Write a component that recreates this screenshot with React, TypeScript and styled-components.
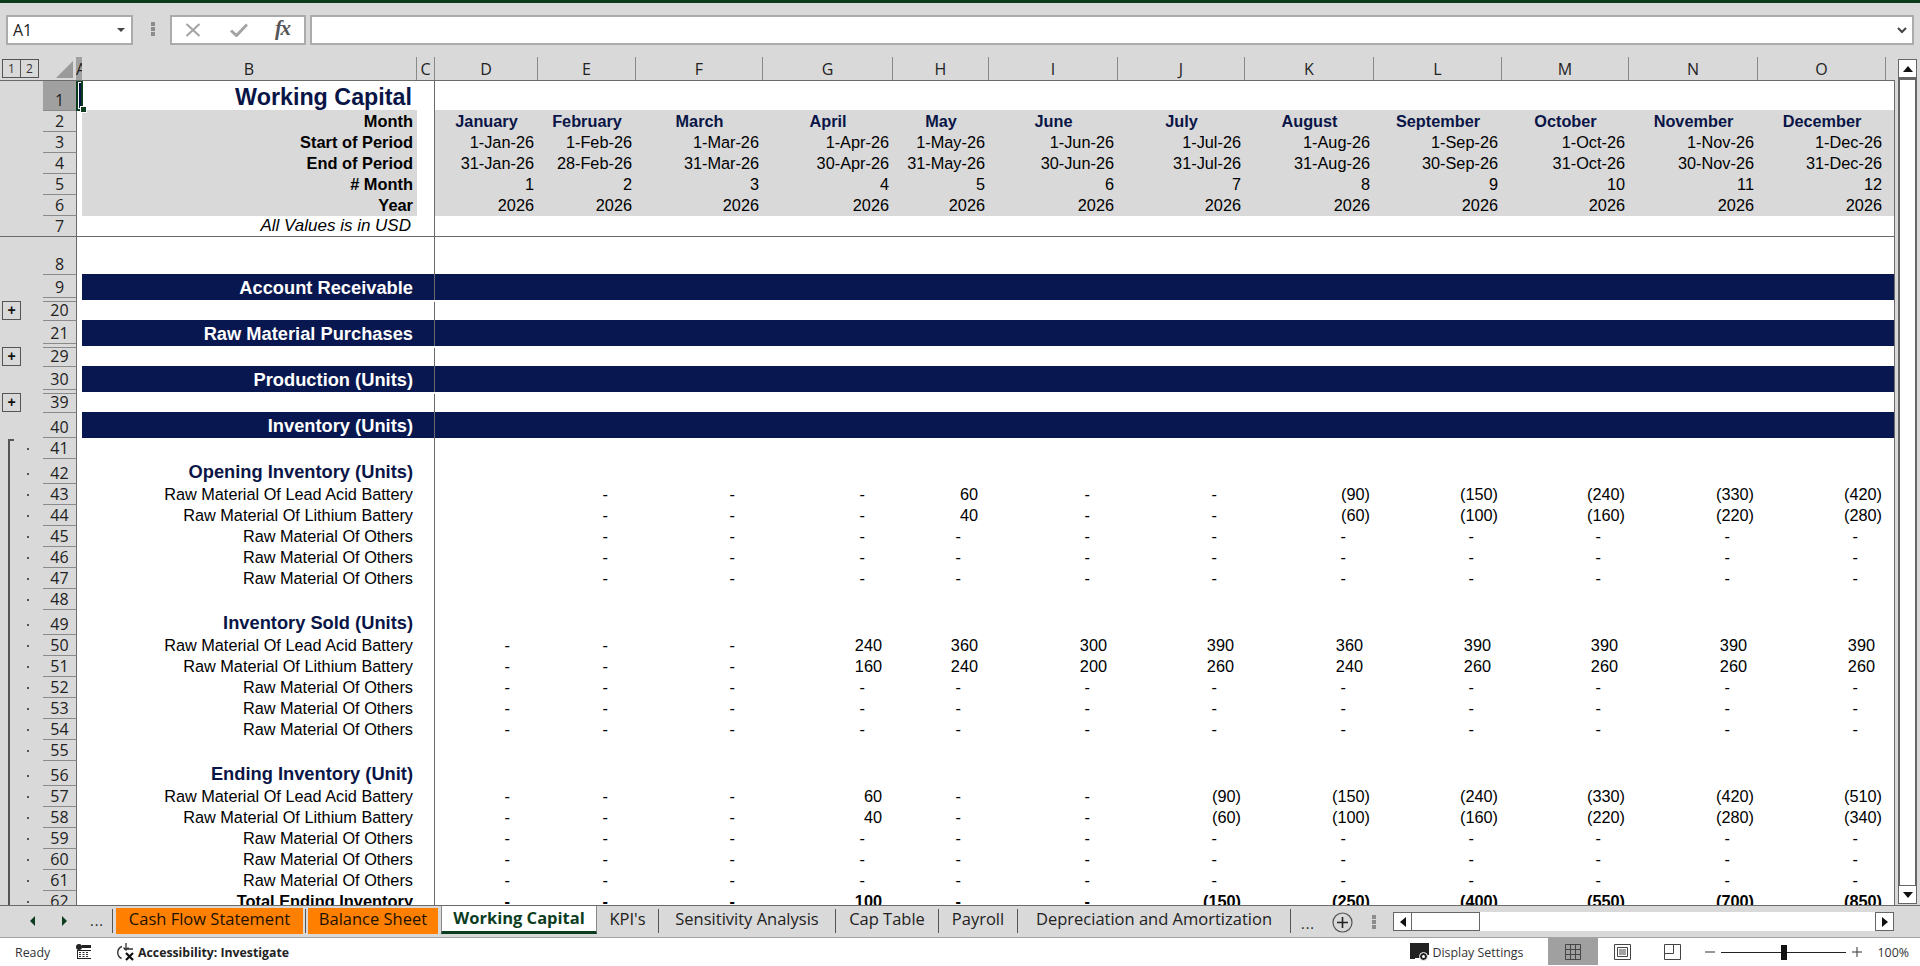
import styled, { createGlobalStyle } from 'styled-components';

const GlobalStyle = createGlobalStyle`
  html, body { margin: 0; padding: 0; width: 1920px; height: 966px; overflow: hidden; background: #d9d9d9; }
  * { box-sizing: border-box; }
  body { font-family: "Liberation Sans", Arial, sans-serif; }
`;

const UI_FONT = '"Open Sans", "Noto Sans", sans-serif';
const NAVY = '#0a1547';
const LINE = '#6a6a6a';
const GREY = '#d9d9d9';

type Fill = 'grey' | 'navy';
type Variant = 'title' | 'head' | 'note' | 'band' | 'section' | 'plain' | 'total';

type RowDef = {
  n: number;
  h: number;
  label?: string;
  variant?: Variant;
  fill?: Fill;
  values?: string[];
  centered?: boolean;
  navyText?: boolean;
  bold?: boolean;
  double?: boolean;
  plus?: boolean;
  grouped?: boolean;
  freeze?: boolean;
  selected?: boolean;
};

const COLUMNS: { name: string; w: number }[] = [
  { name: 'D', w: 103 },
  { name: 'E', w: 98 },
  { name: 'F', w: 127 },
  { name: 'G', w: 130 },
  { name: 'H', w: 96 },
  { name: 'I', w: 129 },
  { name: 'J', w: 127 },
  { name: 'K', w: 129 },
  { name: 'L', w: 128 },
  { name: 'M', w: 127 },
  { name: 'N', w: 129 },
  { name: 'O', w: 128 },
];

const MONTHS = ['January', 'February', 'March', 'April', 'May', 'June', 'July', 'August', 'September', 'October', 'November', 'December'];
const SHORT = ['Jan', 'Feb', 'Mar', 'Apr', 'May', 'Jun', 'Jul', 'Aug', 'Sep', 'Oct', 'Nov', 'Dec'];
const LAST_DAY = [31, 28, 31, 30, 31, 30, 31, 31, 30, 31, 30, 31];
const ZERO_ROW = Array(12).fill('-');
const ZERO_ROW_FROM_E = ['', ...Array(11).fill('-')];

const RM_LEAD = 'Raw Material Of Lead Acid Battery';
const RM_LITHIUM = 'Raw Material Of Lithium Battery';
const RM_OTHERS = 'Raw Material Of Others';

const ROWS: RowDef[] = [
  { n: 1, h: 30, label: 'Working Capital', variant: 'title', selected: true },
  { n: 2, h: 21, label: 'Month', variant: 'head', fill: 'grey', values: MONTHS, centered: true, navyText: true, bold: true },
  { n: 3, h: 21, label: 'Start of Period', variant: 'head', fill: 'grey', values: SHORT.map((m) => `1-${m}-26`) },
  { n: 4, h: 21, label: 'End of Period', variant: 'head', fill: 'grey', values: SHORT.map((m, i) => `${LAST_DAY[i]}-${m}-26`) },
  { n: 5, h: 21, label: '# Month', variant: 'head', fill: 'grey', values: MONTHS.map((_, i) => `${i + 1}`) },
  { n: 6, h: 21, label: 'Year', variant: 'head', fill: 'grey', values: MONTHS.map(() => '2026') },
  { n: 7, h: 21, label: 'All Values is in USD', variant: 'note', freeze: true },
  { n: 8, h: 38 },
  { n: 9, h: 27, label: 'Account Receivable', variant: 'band', fill: 'navy', double: true },
  { n: 20, h: 19, plus: true },
  { n: 21, h: 27, label: 'Raw Material Purchases', variant: 'band', fill: 'navy', double: true },
  { n: 29, h: 19, plus: true },
  { n: 30, h: 27, label: 'Production (Units)', variant: 'band', fill: 'navy', double: true },
  { n: 39, h: 19, plus: true },
  { n: 40, h: 25, label: 'Inventory (Units)', variant: 'band', fill: 'navy' },
  { n: 41, h: 21, grouped: true },
  { n: 42, h: 25, label: 'Opening Inventory (Units)', variant: 'section', grouped: true },
  { n: 43, h: 21, label: RM_LEAD, variant: 'plain', grouped: true, values: ['', '-', '-', '-', '60', '-', '-', '(90)', '(150)', '(240)', '(330)', '(420)'] },
  { n: 44, h: 21, label: RM_LITHIUM, variant: 'plain', grouped: true, values: ['', '-', '-', '-', '40', '-', '-', '(60)', '(100)', '(160)', '(220)', '(280)'] },
  { n: 45, h: 21, label: RM_OTHERS, variant: 'plain', grouped: true, values: ZERO_ROW_FROM_E },
  { n: 46, h: 21, label: RM_OTHERS, variant: 'plain', grouped: true, values: ZERO_ROW_FROM_E },
  { n: 47, h: 21, label: RM_OTHERS, variant: 'plain', grouped: true, values: ZERO_ROW_FROM_E },
  { n: 48, h: 21, grouped: true },
  { n: 49, h: 25, label: 'Inventory Sold (Units)', variant: 'section', grouped: true },
  { n: 50, h: 21, label: RM_LEAD, variant: 'plain', grouped: true, values: ['-', '-', '-', '240', '360', '300', '390', '360', '390', '390', '390', '390'] },
  { n: 51, h: 21, label: RM_LITHIUM, variant: 'plain', grouped: true, values: ['-', '-', '-', '160', '240', '200', '260', '240', '260', '260', '260', '260'] },
  { n: 52, h: 21, label: RM_OTHERS, variant: 'plain', grouped: true, values: ZERO_ROW },
  { n: 53, h: 21, label: RM_OTHERS, variant: 'plain', grouped: true, values: ZERO_ROW },
  { n: 54, h: 21, label: RM_OTHERS, variant: 'plain', grouped: true, values: ZERO_ROW },
  { n: 55, h: 21, grouped: true },
  { n: 56, h: 25, label: 'Ending Inventory (Unit)', variant: 'section', grouped: true },
  { n: 57, h: 21, label: RM_LEAD, variant: 'plain', grouped: true, values: ['-', '-', '-', '60', '-', '-', '(90)', '(150)', '(240)', '(330)', '(420)', '(510)'] },
  { n: 58, h: 21, label: RM_LITHIUM, variant: 'plain', grouped: true, values: ['-', '-', '-', '40', '-', '-', '(60)', '(100)', '(160)', '(220)', '(280)', '(340)'] },
  { n: 59, h: 21, label: RM_OTHERS, variant: 'plain', grouped: true, values: ZERO_ROW },
  { n: 60, h: 21, label: RM_OTHERS, variant: 'plain', grouped: true, values: ZERO_ROW },
  { n: 61, h: 21, label: RM_OTHERS, variant: 'plain', grouped: true, values: ZERO_ROW },
  { n: 62, h: 21, label: 'Total Ending Inventory', variant: 'total', grouped: true, bold: true, values: ['-', '-', '-', '100', '-', '-', '(150)', '(250)', '(400)', '(550)', '(700)', '(850)'] },
];

const Page = styled.div`
  width: 1920px;
  height: 966px;
  display: flex;
  flex-direction: column;
  background: ${GREY};
  overflow: hidden;
`;

const TitleStrip = styled.div`
  height: 3px;
  flex: none;
  background: #0b3a1c;
`;

const FormulaBar = styled.div`
  height: 54px;
  flex: none;
  padding: 12px 6px 0 6px;
  display: flex;
  align-items: flex-start;
`;

const NameBox = styled.div`
  width: 127px;
  height: 30px;
  background: #fff;
  border: 2px solid #ababab;
  display: flex;
  align-items: center;
  justify-content: space-between;
  padding: 0 6px 0 5px;
  font: 16px ${UI_FONT};
  color: #222;
`;

const Caret = styled.span`
  width: 0;
  height: 0;
  border-left: 4px solid transparent;
  border-right: 4px solid transparent;
  border-top: 4px solid #444;
`;

const GripSpacer = styled.span`
  width: 18px;
  flex: none;
`;

const GripDots = styled.div`
  width: 4px;
  height: 14px;
  margin: 7px 0 0 0;
  background: repeating-linear-gradient(to bottom, #8c8c8c 0 4px, transparent 4px 5px);
`;

const FormulaButtons = styled.div`
  width: 136px;
  height: 30px;
  background: #fff;
  border: 2px solid #ababab;
  display: flex;
  align-items: center;
  padding-left: 13px;
  margin-left: 15px;
`;

const CheckMark = styled.svg`
  margin-left: 29px;
  flex: none;
`;

const FxLabel = styled.span`
  font: italic bold 21px "Liberation Serif", serif;
  color: #555;
  margin-left: 27px;
  margin-top: -3px;
  letter-spacing: -1.5px;
`;

const FormulaInput = styled.div`
  flex: 1;
  height: 30px;
  margin-left: 4px;
  background: #fff;
  border: 2px solid #ababab;
  display: flex;
  align-items: center;
  justify-content: flex-end;
  padding-right: 5px;
`;

const Workspace = styled.div`
  height: 848px;
  flex: none;
  display: flex;
`;

const SheetArea = styled.div`
  width: 1895px;
  display: flex;
  flex-direction: column;
`;

const ColumnHeader = styled.div`
  height: 24px;
  flex: none;
  display: flex;
  border-bottom: 1px solid ${LINE};
`;

const Corner = styled.div`
  width: 76px;
  display: flex;
  align-items: flex-start;
  padding: 2px 3px 0 2px;
  justify-content: space-between;
`;

const OutlineLevels = styled.div`
  display: flex;
`;

const OutlineLevel = styled.div`
  width: 19px;
  height: 19px;
  border: 1px solid #555;
  margin-right: -1px;
  font: 12px ${UI_FONT};
  color: #333;
  display: flex;
  align-items: center;
  justify-content: center;
`;

const SelectAll = styled.svg`
  margin-top: 2px;
  flex: none;
`;

const ColHead = styled.div<{ $w: number; $active?: boolean; $noEdge?: boolean }>`
  width: ${(p) => p.$w}px;
  flex: none;
  overflow: hidden;
  background: ${(p) => (p.$active ? '#a0a0a0' : 'transparent')};
  border-right: ${(p) => (p.$noEdge ? 'none' : '1px solid #8a8a8a')};
  font: 16px ${UI_FONT};
  color: #222;
  line-height: 25px;
  text-align: center;
`;

const SheetBody = styled.div`
  flex: 1;
  position: relative;
  overflow: hidden;
  background: #fff;
  border-right: 1px solid ${LINE};
`;

const Row = styled.div<{ $h: number; $freeze?: boolean }>`
  height: ${(p) => p.$h}px;
  display: flex;
  align-items: stretch;
  border-bottom: ${(p) => (p.$freeze ? `1px solid ${LINE}` : 'none')};
`;

const Gutter = styled.div`
  width: 43px;
  flex: none;
  background: ${GREY};
  position: relative;
`;

const OutlineDot = styled.span`
  position: absolute;
  left: 27px;
  bottom: 9px;
  width: 2px;
  height: 2px;
  background: #555;
`;

const PlusButton = styled.div`
  position: absolute;
  left: 2px;
  bottom: 1px;
  width: 19px;
  height: 19px;
  background: ${GREY};
  border: 1px solid #555;
  font: bold 14px/16px "Liberation Sans", sans-serif;
  color: #111;
  text-align: center;
`;

const RowHead = styled.div<{ $active?: boolean; $double?: boolean; $noLine?: boolean }>`
  width: 34px;
  flex: none;
  position: relative;
  background: ${(p) => (p.$active ? '#a0a0a0' : GREY)};
  border-right: 1px solid ${LINE};
  border-bottom: ${(p) => (p.$noLine ? 'none' : '1px solid #8a8a8a')};
  padding-bottom: ${(p) => (p.$double ? 4 : 0)}px;
  display: flex;
  align-items: flex-end;
  justify-content: center;
  font: 16px/20px ${UI_FONT};
  color: #222;
  &::after {
    content: '';
    display: ${(p) => (p.$double ? 'block' : 'none')};
    position: absolute;
    left: 0;
    right: 0;
    bottom: 3px;
    height: 1px;
    background: #8a8a8a;
  }
`;

const ColA = styled.div`
  width: 5px;
  flex: none;
`;

const fillColor = (fill?: Fill) => (fill === 'navy' ? '#08174f' : fill === 'grey' ? GREY : 'transparent');

const LabelCell = styled.div<{ $fill?: Fill; $double?: boolean }>`
  width: 335px;
  flex: none;
  background: ${(p) => fillColor(p.$fill)};
  margin: ${(p) => (p.$fill ? '-1px' : '0')} 0 ${(p) => (p.$double ? 2 : 0)}px 0;
  padding: 0 4px ${(p) => (p.$fill === 'navy' ? 2 : 1)}px 0;
  display: flex;
  align-items: flex-end;
  justify-content: flex-end;
  white-space: nowrap;
`;

const Label = styled.span<{ $variant: Variant }>`
  line-height: 20px;
  ${(p) => {
    switch (p.$variant) {
      case 'title':
        return `font-size: 23.3px; font-weight: 700; color: ${NAVY}; line-height: 26px; margin-right: 1px;`;
      case 'head':
        return 'font-size: 16.4px; font-weight: 700; color: #000;';
      case 'note':
        return 'font-size: 17px; font-style: italic; color: #000; margin: 0 2px -1px 0;';
      case 'band':
        return 'font-size: 18.3px; font-weight: 700; color: #fff;';
      case 'section':
        return `font-size: 18.3px; font-weight: 700; color: ${NAVY}; margin-bottom: 1px;`;
      case 'total':
        return 'font-size: 16.4px; font-weight: 700; color: #000;';
      default:
        return 'font-size: 16.3px; color: #000;';
    }
  }}
`;

const GapCell = styled.div<{ $fill?: Fill; $double?: boolean }>`
  width: 18px;
  flex: none;
  background: ${(p) => (p.$fill === 'navy' ? fillColor(p.$fill) : 'transparent')};
  margin: ${(p) => (p.$fill === 'navy' ? '-1px' : '0')} 0 ${(p) => (p.$double ? 2 : 0)}px 0;
  border-right: 1px solid ${LINE};
`;

const DataCells = styled.div<{ $fill?: Fill; $double?: boolean }>`
  flex: 1;
  display: grid;
  grid-template-columns: ${COLUMNS.map((c) => `${c.w}px`).join(' ')} 8px;
  background: ${(p) => fillColor(p.$fill)};
  margin: ${(p) => (p.$fill ? '-1px' : '0')} 0 ${(p) => (p.$double ? 2 : 0)}px 0;
`;

const padFor = (value: string) => {
  if (value === '-') return 28;
  if (value.startsWith('(')) return 4;
  return 11;
};

const Value = styled.div<{ $pad: number; $center?: boolean; $navy?: boolean; $bold?: boolean }>`
  display: flex;
  align-items: flex-end;
  justify-content: ${(p) => (p.$center ? 'center' : 'flex-end')};
  padding: 0 ${(p) => p.$pad}px 1px 0;
  font-size: 16.3px;
  line-height: 20px;
  font-weight: ${(p) => (p.$bold ? 700 : 400)};
  color: ${(p) => (p.$navy ? NAVY : '#000')};
  white-space: nowrap;
`;

const SelectionBox = styled.div`
  position: absolute;
  left: 76px;
  top: -1px;
  width: 7px;
  height: 31px;
  background: #fff;
  border: 2px solid #0c3d1f;
  padding: 1px 0;
`;

const SelectionInk = styled.div`
  height: 100%;
  background: ${NAVY};
  margin: 0 0 0 1px;
  width: 2px;
`;

const SelectionHandle = styled.div`
  position: absolute;
  left: 2px;
  bottom: -4px;
  width: 7px;
  height: 7px;
  background: #0c3d1f;
  border: 1px solid #fff;
`;

const GroupBracket = styled.div`
  position: absolute;
  left: 8px;
  top: 358px;
  bottom: 0;
  width: 6px;
  border-left: 2px solid #555;
  border-top: 2px solid #555;
`;

const VScroll = styled.div`
  width: 25px;
  flex: none;
  padding: 2px 3px 1px 3px;
  display: flex;
  flex-direction: column;
`;

const ScrollButton = styled.div<{ $w?: number; $h?: number }>`
  width: ${(p) => (p.$w ? `${p.$w}px` : '100%')};
  height: ${(p) => (p.$h ? `${p.$h}px` : '100%')};
  flex: none;
  background: #fff;
  border: 1px solid #666;
  display: flex;
  align-items: center;
  justify-content: center;
`;

const VThumb = styled.div`
  flex: 1;
  background: #fff;
  border-left: 2px solid #666;
  border-right: 2px solid #666;
  border-top: 2px solid #666;
`;

const TabBar = styled.div`
  height: 33px;
  flex: none;
  display: flex;
  align-items: flex-start;
  border-top: 1px solid ${LINE};
  border-bottom: 1px solid #a3a3a3;
  font: 16.5px ${UI_FONT};
  color: #222;
`;

const SheetNav = styled.div`
  width: 113px;
  height: 24px;
  margin-top: 3px;
  flex: none;
  border-right: 1px solid #555;
  display: flex;
  align-items: center;
  padding-left: 30px;
`;

const NavArrow = styled.span<{ $left?: boolean }>`
  width: 0;
  height: 0;
  border-top: 5px solid transparent;
  border-bottom: 5px solid transparent;
  border-right: ${(p) => (p.$left ? '5px solid #0c3d1f' : 'none')};
  border-left: ${(p) => (p.$left ? 'none' : '5px solid #0c3d1f')};
  margin-right: 27px;
`;

const Ellipsis = styled.span<{ $ml?: number }>`
  font: 14px ${UI_FONT};
  letter-spacing: 1px;
  color: #222;
  line-height: 20px;
  margin-left: ${(p) => p.$ml ?? 0}px;
`;

const Tab = styled.div<{ $w: number; $tone: 'plain' | 'orange' | 'active' }>`
  width: ${(p) => p.$w}px;
  flex: none;
  display: flex;
  align-items: center;
  justify-content: center;
  white-space: nowrap;
  padding-bottom: 5px;
  ${(p) =>
    p.$tone === 'orange'
      ? 'height: 26px; margin-top: 2px; background: #ff8000; color: #1d1200;'
      : p.$tone === 'active'
        ? 'height: 28px; padding-bottom: 3px; background: #fff; color: #0c3d1f; font-weight: 700; border-bottom: 3px solid #0c3d1f; border-left: 1px solid #8a8a8a; border-right: 1px solid #8a8a8a;'
        : 'height: 24px; margin-top: 3px; border-right: 1px solid #555;'}
`;

const TabGap = styled.div<{ $w: number; $line?: boolean }>`
  width: ${(p) => p.$w}px;
  flex: none;
  height: 24px;
  margin-top: 3px;
  background: ${(p) => (p.$line ? 'linear-gradient(#555, #555) center / 1px 100% no-repeat' : 'none')};
`;

const MoreTabs = styled.div`
  width: 34px;
  flex: none;
  margin-top: 5px;
  text-align: center;
`;

const AddSheet = styled.svg`
  flex: none;
  margin: 6px 0 0 7px;
`;

const TabGrip = styled.div`
  width: 4px;
  height: 14px;
  flex: none;
  margin: 9px 0 0 19px;
  background: repeating-linear-gradient(to bottom, #8c8c8c 0 4px, transparent 4px 5px);
`;

const HScroll = styled.div`
  width: 501px;
  height: 19px;
  flex: none;
  margin: 6px 0 0 17px;
  background: #fff;
  display: flex;
`;

const HThumb = styled.div`
  width: 69px;
  margin-left: -1px;
  border: 1px solid #666;
`;

const HTrack = styled.div`
  flex: 1;
`;

const StatusBar = styled.div`
  flex: 1;
  background: #fff;
  display: flex;
  align-items: center;
  font: 12.4px ${UI_FONT};
  color: #333;
`;

const ReadyText = styled.span`
  width: 61px;
  margin-left: 15px;
  flex: none;
`;

const StatusIcon = styled.svg<{ $ml?: number }>`
  flex: none;
  margin-left: ${(p) => p.$ml ?? 0}px;
`;

const AccessText = styled.span`
  margin-left: 2px;
  font-weight: 700;
  color: #222;
  font-size: 12.3px;
  white-space: nowrap;
`;

const DisplaySettings = styled.div`
  margin-left: auto;
  display: flex;
  align-items: center;
  gap: 3px;
`;

const ViewButton = styled.div<{ $active?: boolean; $ml?: number }>`
  width: 50px;
  height: 27px;
  margin: 0 0 1px ${(p) => p.$ml ?? 0}px;
  flex: none;
  align-self: flex-start;
  background: ${(p) => (p.$active ? '#a0a0a0' : 'transparent')};
  display: flex;
  align-items: center;
  justify-content: center;
`;

const ZoomGroup = styled.div`
  display: flex;
  align-items: center;
  margin-left: 7px;
  margin-right: 11px;
`;

const ZoomTrack = styled.div`
  width: 125px;
  height: 1px;
  margin: 0 6px;
  background: #222;
  position: relative;
`;

const ZoomThumb = styled.div`
  position: absolute;
  left: 60px;
  top: -7px;
  width: 6px;
  height: 15px;
  background: #111;
`;

const ZoomSign = styled.svg`
  flex: none;
`;

const ZoomValue = styled.span`
  margin-left: 16px;
`;

const CancelIcon = () => (
  <svg width="16" height="14" viewBox="0 0 16 14">
    <path d="M1.5 1 14.5 13M14.5 1 1.5 13" stroke="#a3a3a3" strokeWidth="2" fill="none" />
  </svg>
);

const CheckIcon = () => (
  <CheckMark width="18" height="14" viewBox="0 0 18 14">
    <path d="M1 7.5 6.5 12.5 17 1.5" stroke="#a3a3a3" strokeWidth="3" fill="none" />
  </CheckMark>
);

const UpTriangle = () => (
  <svg width="10" height="6" viewBox="0 0 10 6">
    <path d="M5 0 10 6H0Z" fill="#111" />
  </svg>
);

const DownTriangle = () => (
  <svg width="10" height="6" viewBox="0 0 10 6">
    <path d="M0 0H10L5 6Z" fill="#111" />
  </svg>
);

const SideTriangle = ({ left }: { left?: boolean }) => (
  <svg width="6" height="10" viewBox="0 0 6 10">
    <path d={left ? 'M6 0V10L0 5Z' : 'M0 0V10L6 5Z'} fill="#111" />
  </svg>
);

const App = () => {
  return (
    <Page>
      <GlobalStyle />
      <TitleStrip />
      <FormulaBar>
        <NameBox>
          A1
          <Caret />
        </NameBox>
        <GripSpacer />
        <GripDots />
        <FormulaButtons>
          <CancelIcon />
          <CheckIcon />
          <FxLabel>fx</FxLabel>
        </FormulaButtons>
        <FormulaInput>
          <svg width="10" height="7" viewBox="0 0 10 7">
            <path d="M1 1 5 5 9 1" stroke="#444" strokeWidth="2" fill="none" />
          </svg>
        </FormulaInput>
      </FormulaBar>

      <Workspace>
        <SheetArea>
          <ColumnHeader>
            <Corner>
              <OutlineLevels>
                <OutlineLevel>1</OutlineLevel>
                <OutlineLevel>2</OutlineLevel>
              </OutlineLevels>
              <SelectAll width="17" height="17" viewBox="0 0 17 17">
                <path d="M17 0V17H0Z" fill="#9a9a9a" />
              </SelectAll>
            </Corner>
            <ColHead $w={6} $active $noEdge>
              A
            </ColHead>
            <ColHead $w={335}>B</ColHead>
            <ColHead $w={18}>C</ColHead>
            {COLUMNS.map((col) => (
              <ColHead key={col.name} $w={col.w}>
                {col.name}
              </ColHead>
            ))}
          </ColumnHeader>

          <SheetBody>
            {ROWS.map((row) => (
              <Row key={row.n} $h={row.h} $freeze={row.freeze}>
                <Gutter>
                  {row.grouped && <OutlineDot />}
                  {row.plus && <PlusButton>+</PlusButton>}
                </Gutter>
                <RowHead $active={row.selected} $double={row.double} $noLine={row.freeze}>
                  {row.n}
                </RowHead>
                <ColA />
                <LabelCell $fill={row.fill} $double={row.double}>
                  {row.label && <Label $variant={row.variant ?? 'plain'}>{row.label}</Label>}
                </LabelCell>
                <GapCell $fill={row.fill} $double={row.double} />
                <DataCells $fill={row.fill} $double={row.double}>
                  {row.values?.map((value, idx) => (
                    <Value
                      key={COLUMNS[idx].name}
                      $pad={row.n < 7 ? (row.centered ? 0 : 4) : padFor(value)}
                      $center={row.centered}
                      $navy={row.navyText}
                      $bold={row.bold}
                    >
                      {value}
                    </Value>
                  ))}
                </DataCells>
              </Row>
            ))}
            <GroupBracket />
            <SelectionBox>
              <SelectionInk />
              <SelectionHandle />
            </SelectionBox>
          </SheetBody>
        </SheetArea>

        <VScroll>
          <ScrollButton $h={19}>
            <UpTriangle />
          </ScrollButton>
          <VThumb />
          <ScrollButton $h={19}>
            <DownTriangle />
          </ScrollButton>
        </VScroll>
      </Workspace>

      <TabBar>
        <SheetNav>
          <NavArrow $left />
          <NavArrow />
          <Ellipsis $ml={-4}>...</Ellipsis>
        </SheetNav>
        <TabGap $w={3} />
        <Tab $w={187} $tone="orange">
          Cash Flow Statement
        </Tab>
        <TabGap $w={5} $line />
        <Tab $w={130} $tone="orange">
          Balance Sheet
        </Tab>
        <TabGap $w={3} />
        <Tab $w={156} $tone="active">
          Working Capital
        </Tab>
        <Tab $w={62} $tone="plain">
          KPI's
        </Tab>
        <Tab $w={177} $tone="plain">
          Sensitivity Analysis
        </Tab>
        <Tab $w={103} $tone="plain">
          Cap Table
        </Tab>
        <Tab $w={79} $tone="plain">
          Payroll
        </Tab>
        <Tab $w={273} $tone="plain">
          Depreciation and Amortization
        </Tab>
        <MoreTabs>
          <Ellipsis>...</Ellipsis>
        </MoreTabs>
        <AddSheet width="21" height="21" viewBox="0 0 21 21">
          <circle cx="10.5" cy="10.5" r="9.5" fill="none" stroke="#555" strokeWidth="1.2" />
          <path d="M10.5 5v11M5 10.5h11" stroke="#222" strokeWidth="1.6" />
        </AddSheet>
        <TabGrip />
        <HScroll>
          <ScrollButton $w={19}>
            <SideTriangle left />
          </ScrollButton>
          <HThumb />
          <HTrack />
          <ScrollButton $w={19}>
            <SideTriangle />
          </ScrollButton>
        </HScroll>
      </TabBar>

      <StatusBar>
        <ReadyText>Ready</ReadyText>
        <StatusIcon width="16" height="16" viewBox="0 0 16 16">
          <circle cx="3" cy="3" r="3" fill="#222" />
          <path d="M6 1h9v3H6zM1 6h14v9H1z" fill="#222" />
          <path d="M2 7h13v7H2z" fill="#fff" />
          <path d="M3 8h2v1H3zM6.500 8h2v1h-2zM10 8h2v1h-2zM3 10h2v1H3zM6.500 10h2v1h-2zM10 10h2v1h-2zM3 12h2v1H3zM6.500 12h2v1h-2zM10 12h2v1h-2z" fill="#333" />
        </StatusIcon>
        <StatusIcon $ml={24} width="20" height="18" viewBox="0 0 20 18">
          <path d="M6 3.500A6.500 6.500 0 0 0 5.500 15.500" fill="none" stroke="#333" strokeWidth="1.4" />
          <path d="M10 0v7M7.500 4.500 10 7l2.500-2.500M8 6h9" fill="none" stroke="#333" strokeWidth="1.3" />
          <path d="M10 10l7 7M17 10l-7 7" stroke="#111" strokeWidth="2.2" />
        </StatusIcon>
        <AccessText>Accessibility: Investigate</AccessText>

        <DisplaySettings>
          <StatusIcon width="20" height="19" viewBox="0 0 20 19">
            <path d="M0 0h19v12H10v3H5v1H0z" fill="#222" />
            <circle cx="13.500" cy="13.500" r="4" fill="#222" stroke="#fff" strokeWidth="1" />
            <circle cx="13.500" cy="13.500" r="1.500" fill="#fff" />
          </StatusIcon>
          Display Settings
        </DisplaySettings>

        <ViewButton $active $ml={24}>
          <svg width="16" height="16" viewBox="0 0 16 16">
            <path d="M.5.5h15v15H.5zM5.500.5v15M10.500.5v15M.5 5.500h15M.5 10.500h15" fill="none" stroke="#444" />
          </svg>
        </ViewButton>
        <ViewButton>
          <svg width="17" height="16" viewBox="0 0 17 16">
            <path d="M.5.5h16v15H.5zM3.500 3.500h10v9h-10z" fill="none" stroke="#444" />
            <path d="M5 6h7M5 8h7M5 10h7" stroke="#444" />
          </svg>
        </ViewButton>
        <ViewButton>
          <svg width="17" height="16" viewBox="0 0 17 16">
            <path d="M.5.5h16v15H.5zM.5 9.500h9V.5" fill="none" stroke="#444" />
          </svg>
        </ViewButton>

        <ZoomGroup>
          <ZoomSign width="10" height="10" viewBox="0 0 10 10">
            <path d="M0 5h10" stroke="#333" />
          </ZoomSign>
          <ZoomTrack>
            <ZoomThumb />
          </ZoomTrack>
          <ZoomSign width="10" height="10" viewBox="0 0 10 10">
            <path d="M0 5h10M5 0v10" stroke="#333" />
          </ZoomSign>
          <ZoomValue>100%</ZoomValue>
        </ZoomGroup>
      </StatusBar>
    </Page>
  );
};

export default App;
